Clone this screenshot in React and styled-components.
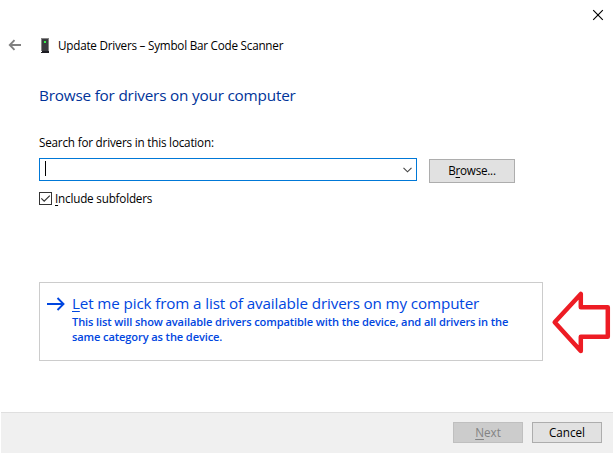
import React from "react";
import styled, { createGlobalStyle } from "styled-components";

const GlobalStyle = createGlobalStyle`
  *, *::before, *::after { box-sizing: border-box; }
  body { margin: 0; background: #fff; overflow: hidden; }
`;

const Dialog = styled.main`
  position: relative;
  display: flex;
  flex-direction: column;
  width: 614px;
  height: 454px;
  padding: 0 1px 1px;
  background: #fff;
  color: #000;
  font-family: "Open Sans", "Noto Sans", sans-serif;
  font-size: 12px;
`;

const Line = styled.span`
  display: block;
  white-space: nowrap;
  font-size: ${(p) => p.$size || 11.7}px;
  letter-spacing: ${(p) => p.$track || 0}px;
  line-height: ${(p) => p.$height || 14}px;
  padding-bottom: ${(p) => (p.$height ? 0 : 2)}px;
  font-weight: ${(p) => p.$weight || 400};
`;

const Key = styled.span`
  text-decoration: underline;
  text-decoration-thickness: 1px;
  text-underline-offset: 2px;
  text-decoration-skip-ink: none;
`;

const TitleBar = styled.header`
  display: flex;
  justify-content: flex-end;
  height: 30px;
  padding: 9px 9px 0 0;
`;

const CloseButton = styled.button`
  width: 12px;
  height: 12px;
  padding: 0;
  border: 0;
  background: none;
  svg { display: block; }
`;

const Heading = styled.div`
  display: flex;
  align-items: center;
  height: 31px;
  padding-left: 7px;
`;

const BackIcon = styled.svg`
  margin-right: 18px;
`;

const DeviceIcon = styled.svg`
  margin-right: 8px;
`;

const Content = styled.section`
  flex: 1;
  padding: 24px 0 0 38px;
`;

const PageTitle = styled.h1`
  margin: 0 0 30px;
  color: #003399;
  font-weight: 400;
`;

const SearchRow = styled.div`
  display: flex;
  align-items: flex-start;
  gap: 12px;
  margin-top: 7px;
`;

const ComboBox = styled.div`
  display: flex;
  align-items: center;
  justify-content: space-between;
  width: 378px;
  height: 23px;
  padding: 0 4px 0 5px;
  border: 1px solid #0078d7;
`;

const Caret = styled.i`
  width: 1px;
  height: 15px;
  margin-top: -2px;
  background: #000;
`;

const Button = styled.button`
  display: flex;
  align-items: center;
  justify-content: center;
  width: ${(p) => p.$width || 70}px;
  height: ${(p) => (p.$tall ? 24 : 21)}px;
  margin: ${(p) => (p.$tall ? "1px 0 0" : "0")};
  padding: 0;
  border: 1px solid ${(p) => (p.disabled ? "#bfbfbf" : "#adadad")};
  background: ${(p) => (p.disabled ? "#cccccc" : "#e1e1e1")};
  color: ${(p) => (p.disabled ? "#838383" : "#000")};
  font-family: inherit;
`;

const CheckRow = styled.div`
  display: flex;
  align-items: center;
  gap: 3px;
  margin-top: 7px;
  height: 18px;
`;

const CheckBox = styled.span`
  width: 13px;
  height: 13px;
  margin-top: -1px;
  border: 1px solid #333;
  svg { display: block; }
`;

const CommandLink = styled.div`
  display: flex;
  width: 504px;
  height: 79px;
  margin-top: 74px;
  padding: 11px 0 0 7px;
  border: 1px solid #cccccc;
  color: #0046e0;
`;

const LinkIcon = styled.svg`
  flex: none;
  margin: 2px 7px 0 0;
`;

const LinkNote = styled.div`
  margin-top: 2px;
`;

const Pointer = styled.svg`
  position: absolute;
  left: 550px;
  top: 288px;
`;

const Footer = styled.footer`
  display: flex;
  justify-content: flex-end;
  gap: 9px;
  height: 41px;
  padding: 9px 11px 0 0;
  border-top: 1px solid #dfdfdf;
  background: #f0f0f0;
`;

export default function App() {
  return (
    <>
      <GlobalStyle />
      <Dialog>
        <TitleBar>
          <CloseButton aria-label="Close">
            <svg width="12" height="12" viewBox="0 0 12 12">
              <path d="M1.2 1.2 10.8 10.8M10.8 1.2 1.2 10.8" stroke="#000" strokeWidth="1.15" />
            </svg>
          </CloseButton>
        </TitleBar>
        <Heading>
          <BackIcon width="14" height="13" viewBox="0 0 14 13">
            <path d="M13 6H2M6.5 1.2 1.8 6l4.7 4.8" fill="none" stroke="#808080" strokeWidth="1.9" />
          </BackIcon>
          <DeviceIcon width="10" height="15" viewBox="0 0 10 15" shapeRendering="crispEdges">
            <path d="M1 0h8v13H1z" fill="#858585" />
            <path d="M2 1h6v12H2z" fill="#3b3b40" />
            <path d="M2 13h7v1H2zM1 14h8v1H1z" fill="#1c1c22" />
            <path d="M4 3h2v2H4z" fill="#35f04a" />
          </DeviceIcon>
          <Line $track={-0.23}>Update Drivers – Symbol Bar Code Scanner</Line>
        </Heading>
        <Content>
          <PageTitle>
            <Line $size={15.3} $height={20} $track={-0.2}>Browse for drivers on your computer</Line>
          </PageTitle>
          <Line $track={-0.2}>Search for drivers in this location:</Line>
          <SearchRow>
            <ComboBox>
              <Caret />
              <svg width="9" height="6" viewBox="0 0 9 6">
                <path d="M.5.8 4.5 4.8 8.5.8" fill="none" stroke="#444" strokeWidth="1.1" />
              </svg>
            </ComboBox>
            <Button $width={86} $tall>
              <Line $track={-0.25}>B<Key>r</Key>owse...</Line>
            </Button>
          </SearchRow>
          <CheckRow>
            <CheckBox>
              <svg width="11" height="11" viewBox="0 0 11 11">
                <path d="M1.3 5.3 4.2 8.2 9.8 2.6" fill="none" stroke="#333" strokeWidth="1.2" />
              </svg>
            </CheckBox>
            <Line $track={-0.2}><Key>I</Key>nclude subfolders</Line>
          </CheckRow>
          <CommandLink>
            <LinkIcon width="18" height="16" viewBox="0 0 18 16">
              <path d="M0 8h16.5M10.5 2l6 6-6 6" fill="none" stroke="currentColor" strokeWidth="1.9" />
            </LinkIcon>
            <div>
              <Line $size={15.2} $height={18} $track={-0.12}>
                <Key>L</Key>et me pick from a list of available drivers on my computer
              </Line>
              <LinkNote>
                <Line $size={11.1} $height={15} $weight={600} $track={-0.12}>
                  This list will show available drivers compatible with the device, and all drivers in the
                </Line>
                <Line $size={11.1} $height={15} $weight={600} $track={-0.12}>same category as the device.</Line>
              </LinkNote>
            </div>
          </CommandLink>
        </Content>
        <Footer>
          <Button disabled><Line><Key>N</Key>ext</Line></Button>
          <Button><Line>Cancel</Line></Button>
        </Footer>
        <Pointer width="64" height="68" viewBox="0 0 64 68">
          <path d="M4.7 34.3 30.8 6V19.3H57.8V48.8H30.8V63Z" fill="#fff" stroke="#ed1c24" strokeWidth="4.5" strokeLinejoin="round" />
        </Pointer>
      </Dialog>
    </>
  );
}
